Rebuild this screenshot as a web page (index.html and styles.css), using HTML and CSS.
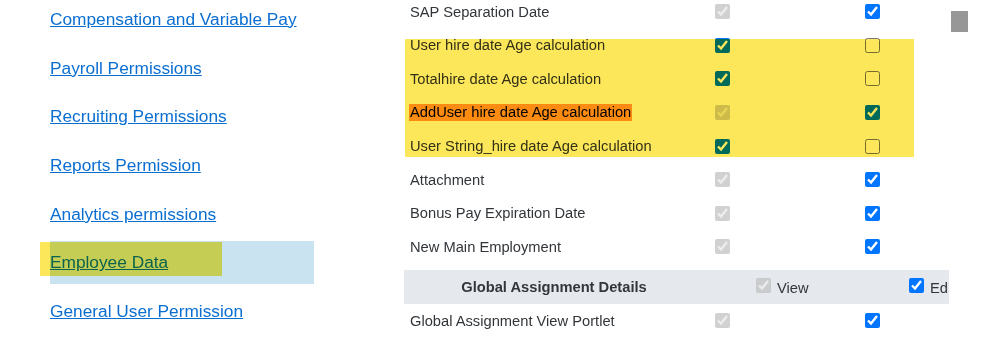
FILE: index.html
```html
<!DOCTYPE html>
<html lang="en">
<head>
  <meta charset="UTF-8" />
  <meta name="viewport" content="width=device-width, initial-scale=1" />
  <title>Permissions</title>
  <link rel="stylesheet" href="styles.css">
</head>
<body>
  <div class="page">
    <nav class="side">
      <div class="side-item"><a href="#">Compensation and Variable Pay</a></div>
      <div class="side-item"><a href="#">Payroll Permissions</a></div>
      <div class="side-item"><a href="#">Recruiting Permissions</a></div>
      <div class="side-item"><a href="#">Reports Permission</a></div>
      <div class="side-item"><a href="#">Analytics permissions</a></div>
      <div class="side-item active"><a href="#">Employee Data</a></div>
      <div class="side-item"><a href="#">General User Permission</a></div>
    </nav>

    <div class="perm">
      <div class="row">
        <span class="label">SAP Separation Date</span>
        <span class="cell"><input type="checkbox" checked disabled /></span>
        <span class="cell"><input type="checkbox" checked /></span>
      </div>
      <div class="row">
        <span class="label">User hire date Age calculation</span>
        <span class="cell"><input type="checkbox" checked /></span>
        <span class="cell"><input type="checkbox" /></span>
      </div>
      <div class="row">
        <span class="label">Totalhire date Age calculation</span>
        <span class="cell"><input type="checkbox" checked /></span>
        <span class="cell"><input type="checkbox" /></span>
      </div>
      <div class="row">
        <span class="label"><span class="hl-orange">AddUser hire date Age calculation</span></span>
        <span class="cell"><input type="checkbox" checked disabled /></span>
        <span class="cell"><input type="checkbox" checked /></span>
      </div>
      <div class="row">
        <span class="label">User String_hire date Age calculation</span>
        <span class="cell"><input type="checkbox" checked /></span>
        <span class="cell"><input type="checkbox" /></span>
      </div>
      <div class="row">
        <span class="label">Attachment</span>
        <span class="cell"><input type="checkbox" checked disabled /></span>
        <span class="cell"><input type="checkbox" checked /></span>
      </div>
      <div class="row">
        <span class="label">Bonus Pay Expiration Date</span>
        <span class="cell"><input type="checkbox" checked disabled /></span>
        <span class="cell"><input type="checkbox" checked /></span>
      </div>
      <div class="row">
        <span class="label">New Main Employment</span>
        <span class="cell"><input type="checkbox" checked disabled /></span>
        <span class="cell"><input type="checkbox" checked /></span>
      </div>

      <div class="row section">
        <span class="label">Global Assignment Details</span>
        <label class="cell view"><input type="checkbox" checked disabled /> View</label>
        <label class="cell edit"><input type="checkbox" checked /> Edit</label>
      </div>

      <div class="row">
        <span class="label">Global Assignment View Portlet</span>
        <span class="cell"><input type="checkbox" checked disabled /></span>
        <span class="cell"><input type="checkbox" checked /></span>
      </div>
    </div>

    <div class="scroll-thumb"></div>

    <!-- marker annotations drawn over the screenshot -->
    <div class="mark mark-rows"></div>
    <div class="mark mark-nav"></div>
  </div>
</body>
</html>
```

FILE: styles.css
```css
body {
  margin: 0;
  font-family: "Liberation Sans", Arial, sans-serif;
  background: #fff;
  color: #32363a;
  overflow: hidden;
}
.page {
  position: relative;
  display: flex;
  height: 344px;
}

/* left navigation */
.side {
  width: 404px;
  flex-shrink: 0;
  padding-left: 50px;
  box-sizing: border-box;
  margin-top: -2px;
  display: flex;
  flex-direction: column;
  gap: 6px;
}
.side-item {
  width: 264px;
  height: 42.7px;
  display: flex;
  align-items: center;
  flex-shrink: 0;
}
.side-item a {
  font-size: 17.3px;
  color: #0a6ed1;
  text-decoration: underline;
}
.side-item.active {
  background: #c9e4f0;
}

/* permission table */
.perm {
  width: 545px;
  flex-shrink: 0;
  overflow: hidden;
  margin-top: -5px;
  font-size: 14.7px;
}
.row {
  display: grid;
  grid-template-columns: 300px 150px 150px;
  align-items: center;
  height: 33.6px;
}
.label {
  padding-left: 6px;
  white-space: nowrap;
}
.cell {
  padding-left: 11px;
  display: flex;
  align-items: center;
}
.cell input {
  width: 15px;
  height: 15px;
  margin: 0;
}
.hl-orange {
  background: #ff9a2e;
  padding: 0 1px;
  margin-left: -1px;
  line-height: 17px;
  display: inline-block;
  color: #000;
}

.section {
  margin-top: 6px;
  height: 34px;
  background: #e5e9ee;
}
.section .label {
  padding-left: 0;
  text-align: center;
  font-weight: bold;
}
.section .cell {
  gap: 6px;
  white-space: nowrap;
  padding-top: 3px;
}
.section .cell input {
  margin-top: -5px;
}
.section .view {
  padding-left: 52px;
}
.section .edit {
  padding-left: 55px;
}

.scroll-thumb {
  position: absolute;
  left: 951px;
  top: 11px;
  width: 17px;
  height: 21px;
  background: #979797;
}

/* highlighter marks */
.mark {
  position: absolute;
  background: #fce65a;
  mix-blend-mode: multiply;
}
.mark-rows {
  left: 405px;
  top: 39px;
  width: 509px;
  height: 118px;
}
.mark-nav {
  left: 40px;
  top: 242px;
  width: 182px;
  height: 34px;
}
```
